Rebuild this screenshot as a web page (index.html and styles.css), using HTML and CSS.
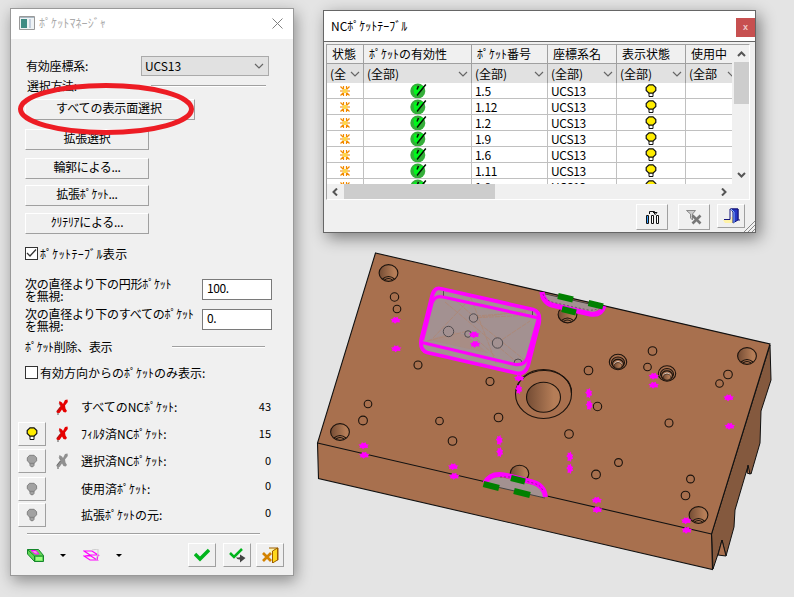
FILE: index.html
```html
<!DOCTYPE html>
<html lang="ja">
<head>
<meta charset="utf-8">
<title>ポケットマネージャ</title>
<link rel="stylesheet" href="styles.css">
</head>
<body>
<svg class="defs" width="0" height="0">
  <symbol id="bulb" viewBox="0 0 12 14"><path d="M4 8h4v4.500H4z" fill="#fff" stroke="#111"/><path d="M4 .8h4l2.800 2.700v3L8 9.200H4L1.200 6.500v-3z" fill="#ffed00" stroke="#111" stroke-width="1.200"/></symbol>
  <symbol id="bulb-off" viewBox="0 0 12 14"><path d="M3.500 1.300h4.600l2.500 2.500v3L8 9.400v2L7 12.700H5l-1-1.300v-2L1.300 6.800v-3z" fill="#a2a2a2" stroke="#808080"/><path d="M3.500 9.300h5" stroke="#808080"/></symbol>
  <symbol id="pin" viewBox="0 0 13 16"><path d="M2 13v3" stroke="#888" stroke-width="1.500"/><path d="M3.500 2 6 3.500 7 5 9 1l2.500-.5L11.800 3 9 6.500l.5 3L11 12l-1.500 1.500L7.500 13 6 10.500 3.500 14 .8 13.800.5 12 4.500 7 3 4z" fill="currentColor"/><path d="M3 4.500 4.500 7M.8 12.500 4.500 8" stroke="#444" stroke-opacity=".45" fill="none"/></symbol>
  <symbol id="star" viewBox="0 0 10 10"><path d="M.5.500 4 4M9.500.500 6 4M.5 9.500 4 6M9.500 9.500 6 6M0 5h3M7 5h3M3.500 0v3M6.500 0v3M3.500 7v3M6.500 7v3" stroke="#f28a00" stroke-width="1.200"/><path d="M3 3h4v4H3z" fill="#ffd64a"/></symbol>
  <symbol id="ok" viewBox="0 0 17 16"><circle cx="7.800" cy="8" r="7.500" fill="#35ae3a"/><path d="M3.500 4 6 2.500 7.500 6 11 3h3L8 12 6.500 13 4 10z" fill="#00f81c"/><path d="M7 12.500 15.800 1.500M7 6.500 8.500 3" fill="none" stroke="#021402" stroke-width="1.500"/></symbol>
  <symbol id="chev" viewBox="0 0 10 6"><path d="M1 1l4 4 4-4" fill="none" stroke="#666" stroke-width="1.200"/></symbol>
</svg>

<svg class="model" viewBox="0 0 794 597">
  <defs>
    <linearGradient id="bore"><stop offset="0" stop-color="#744c34"/><stop offset=".8" stop-color="#b57d57"/></linearGradient>
    <path id="spot" fill="#f0f" d="M-5-1 l2.500-.2 1-2 1.500 1 2.200-1 .5 2 2.800.2-1.500 1.500.5 2-3.200-.3-1.800 1.600-1.300-1.600-2.200.2.500-1.700z"/>
    <g id="corner-hole"><ellipse rx="9.400" ry="8.400" fill="url(#bore)"/><path d="M-6 6Q0 1 6 6M-4 7q4-3 8 0" fill="none"/></g>
    <g id="step-hole"><ellipse rx="8.700" ry="7.700"/><ellipse cy=".5" rx="6.500" ry="5.500" fill="#8f6043"/><ellipse cy="2" rx="5.500" ry="4.600"/><path d="M-3.800 2q3.800-5 7.600 0" fill="none" stroke="#dcd2cb"/><ellipse cy="3.500" rx="3.800" ry="3" fill="url(#bore)" stroke-width=".5"/></g>
  </defs>
  <path d="M770 345 771 380 761 411 760 443 751 474 747 472 748 466 735 510 734 527 726 556 722 540 718 554 713 569 711.500 534z" fill="#84593e" stroke="#111"/>
  <path d="M748 465l2 9-3-1zM722 540l4 16-8-1z" fill="#a9704e" stroke="#111"/>
  <path d="M375.500 253 770 344 711.500 534 712.500 569.500 318.500 478.500 317.500 443z" fill="#a8704e" stroke="#111" stroke-width="1.100"/>
  <path d="M317.500 443 711.500 534" stroke="#111" stroke-width="1.100"/>
  <g fill="#a8704e" stroke="#1c130d" stroke-width="1.100">
    <use href="#corner-hole" x="388.500" y="273"/><use href="#corner-hole" x="340" y="432"/><use href="#corner-hole" x="747" y="356"/><use href="#corner-hole" x="698.500" y="515"/><use href="#corner-hole" x="567.500" y="314.500"/>
    <ellipse cx="519.500" cy="473.500" rx="9.300" ry="8.300" fill="url(#bore)"/>
    <circle cx="394.500" cy="297" r="4.200"/><circle cx="397" cy="309" r="3.800"/><circle cx="418" cy="365" r="4"/><circle cx="490" cy="381.500" r="4"/><circle cx="368" cy="404" r="3.800"/><circle cx="363" cy="420.500" r="4.400"/><circle cx="439.500" cy="421" r="3.800"/><circle cx="498.500" cy="417.500" r="4.300"/><circle cx="452.500" cy="441" r="4.300"/><circle cx="588.500" cy="370.500" r="4.300"/><circle cx="652.500" cy="351" r="4.300"/><circle cx="647.500" cy="367" r="3.800"/><circle cx="728" cy="374.500" r="4.300"/><circle cx="719.500" cy="383.500" r="3.800"/><circle cx="597.500" cy="406.500" r="4.200"/><circle cx="669" cy="423" r="4"/><circle cx="569" cy="434" r="4.300"/><circle cx="618.500" cy="462.500" r="3.900"/><circle cx="596" cy="474.500" r="4.400"/><circle cx="690.500" cy="479" r="3.900"/><circle cx="685.500" cy="495.500" r="4.300"/>
    <use href="#step-hole" x="618" y="362"/><use href="#step-hole" x="667" y="373.500"/>
    <ellipse cx="543.500" cy="394" rx="28" ry="24.500"/><path d="M516.500 391a27.500 21.500 0 0 1 55 2" fill="none"/><ellipse cx="543.500" cy="397.300" rx="17" ry="15" fill="url(#bore)"/>
  </g>
  <path d="M440 288 531 309Q543 313 539 325L528 366Q525 374 516 372L428 352Q419 349 422 337L432 297Q434 288 440 288z" fill="#a39191"/>
  <g stroke="#ae8672" stroke-width=".8" fill="none" stroke-dasharray="5 1"><path d="M433 338l38-40 25 65M445 302l74 62M471 318l62-3M475 320l52 42M427 341l41-10 27 25M455 300l16 14M474 318l58-8M476 316l50-4M497 343l33-22"/></g>
  <path d="M428 340l26-8 12 3 22 18z" fill="#ae8672" fill-opacity=".4"/>
  <g fill="#a39191" stroke="#514b4e"><circle cx="473.500" cy="318" r="4.200"/><circle cx="448.500" cy="331.500" r="5.200"/><circle cx="468" cy="334" r="3.300"/><circle cx="497.500" cy="343" r="5.200"/><path d="M514 363q0-4 4-4t4 4M443.500 290v6M532.500 311v5" fill="none"/></g>
  <g fill="none" stroke="#f0f" stroke-width="3.800">
    <path d="M440 288.500 533 309.500Q541 312 539 323L528 366Q525 375 516 373L427 352.500Q419 350 421.500 338L431.500 298Q434 287 440 288.500z"/>
    <path d="M422 342.500 515 364.500Q525 366 527.500 357L538.500 318 443 297Q435 295 432 303L422.500 340" stroke-width="3.200"/>
  </g>
  <g fill="#a39191"><path d="M541 293l61 14-9 6-38-7q-12-2-14-13z"/><path d="M484 484q7-10 25-5l24 6q11 3 12 13z"/></g>
  <path d="M541 293l62 14M484 484l61 14" stroke="#444"/>
  <g fill="none" stroke="#f0f" stroke-width="5"><path d="M542 292q1 12 14 14l34 8q11 2 14-8"/><path d="M485 483q6-12 24-7l23 6q12 3 13.500 15"/></g>
  <path d="M543 294q2 7 13 9l32 7q9 1 12-4M500 477l10 0 23 6q8 2 10 8" fill="none" stroke="#6d286d" stroke-width=".7" stroke-dasharray="2 2"/>
  <g stroke="#008000" stroke-width="6"><path d="M558 296l15 3.500M588.500 303l14.500 3.500M562 309l14 3.500M483.500 484l15.500 4M514 491l16 4M511 478l14 3.500"/></g>
  <g>
    <use href="#spot" x="395.500" y="320"/><use href="#spot" x="396" y="348.500"/><use href="#spot" x="474" y="334.500"/><use href="#spot" x="475" y="344"/><use href="#spot" x="519" y="378"/><use href="#spot" x="653.500" y="376"/><use href="#spot" x="653.500" y="385"/><use href="#spot" x="728.500" y="397.500"/><use href="#spot" x="729.500" y="426"/><use href="#spot" x="363.500" y="445.500"/><use href="#spot" x="364" y="455"/><use href="#spot" x="453" y="466.500"/><use href="#spot" x="454" y="476"/><use href="#spot" x="596.500" y="500"/><use href="#spot" x="597" y="509.500"/><use href="#spot" x="686" y="520.500"/><use href="#spot" x="686.500" y="530"/>
    <use href="#spot" transform="translate(519 389) rotate(90)"/><use href="#spot" transform="translate(589 393) rotate(90)"/><use href="#spot" transform="translate(589.500 405) rotate(90)"/><use href="#spot" transform="translate(499.500 440) rotate(90)"/><use href="#spot" transform="translate(500 452) rotate(90)"/><use href="#spot" transform="translate(570 456.500) rotate(90)"/><use href="#spot" transform="translate(570 468.500) rotate(90)"/>
  </g>
</svg>

<section class="win manager">
  <header class="m-title">
    <svg width="16" height="14" viewBox="0 0 16 14"><path d="M.5.500h15v13H.5z" fill="#eef2f4" stroke="#999"/><path d="M2 3h6v9H2z" fill="#3f8b83"/><path d="M10 3h2v9h-2z" fill="#c3cedd"/><path d="M1 1.500h14" stroke="#a9b9c5"/></svg>
    <span>ﾎﾟｹｯﾄﾏﾈｰｼﾞｬ</span>
    <svg class="m-close" width="11" height="11" viewBox="0 0 11 11"><path d="M.5.500l10 10M10.500.500l-10 10" stroke="#808080"/></svg>
  </header>
  <div class="row cs"><span>有効座標系:</span><div class="select">UCS13<svg width="10" height="6"><use href="#chev"/></svg></div></div>
  <div class="row method"><span>選択方法:</span><hr></div>
  <div class="stack">
    <button class="wide">すべての表示面選択</button>
    <button>拡張選択</button>
    <button>輪郭による...</button>
    <button>拡張ﾎﾟｹｯﾄ...</button>
    <button>ｸﾘﾃﾘｱによる...</button>
  </div>
  <div class="row check c1"><i><svg width="11" height="11" viewBox="0 0 11 11"><path d="M1 5l3 3 6-6.500" fill="none" stroke="#333" stroke-width="1.300"/></svg></i><span class="loose">ﾎﾟｹｯﾄﾃｰﾌﾞﾙ表示</span></div>
  <div class="row field"><p>次の直径より下の円形ﾎﾟｹｯﾄ<br>を無視:</p><div class="input">100.</div></div>
  <div class="row field"><p>次の直径より下のすべてのﾎﾟｹｯﾄ<br>を無視:</p><div class="input">0.</div></div>
  <div class="row del"><span class="snug">ﾎﾟｹｯﾄ削除、表示</span><hr></div>
  <div class="row check c2"><i></i><span>有効方向からのﾎﾟｹｯﾄのみ表示:</span></div>
  <div class="counts">
    <b></b><svg class="red" width="13" height="16"><use href="#pin"/></svg><span>すべてのNCﾎﾟｹｯﾄ:</span><em>43</em>
    <b class="tool"><svg width="12" height="14"><use href="#bulb"/></svg></b><svg class="red" width="13" height="16"><use href="#pin"/></svg><span>ﾌｨﾙﾀ済NCﾎﾟｹｯﾄ:</span><em>15</em>
    <b class="tool"><svg width="12" height="14"><use href="#bulb-off"/></svg></b><svg class="gray" width="13" height="16"><use href="#pin"/></svg><span>選択済NCﾎﾟｹｯﾄ:</span><em>0</em>
    <b class="tool"><svg width="12" height="14"><use href="#bulb-off"/></svg></b><u></u><span>使用済ﾎﾟｹｯﾄ:</span><em class="up">0</em>
    <b class="tool"><svg width="12" height="14"><use href="#bulb-off"/></svg></b><u></u><span>拡張ﾎﾟｹｯﾄの元:</span><em class="up">0</em>
  </div>
  <hr class="sep">
  <footer class="m-foot">
    <svg width="17" height="15" viewBox="0 0 17 15"><path d="M.5 1.500h11l5 6v6H7.500L.5 6z" fill="#62d755" stroke="#15862c"/><path d="M.5 1.500l7 6.500h9M7.500 8v5.500" fill="none" stroke="#15862c"/><path d="M9 9h6v3.500H9z" fill="#9cff80"/><path d="M4 2.500h5l3 3.500H8z" fill="#e9d" stroke="#f0f"/></svg>
    <svg class="dd" width="6" height="3"><path d="M0 0h6L3 3z"/></svg>
    <svg class="wire" width="17" height="13" viewBox="0 0 17 13"><path d="M1 2h8l6 4H7zM1 7h7l6 4H7zM1 2l6 4M15 6l-1 5M2 7l5-1" fill="none" stroke="#f0f" stroke-width="1.200"/><path d="M9 1l6-1v4l-2 7" fill="none" stroke="#ccc"/></svg>
    <svg class="dd" width="6" height="3"><path d="M0 0h6L3 3z"/></svg>
    <b class="tool ok"><svg width="16" height="14" viewBox="0 0 16 14"><path d="M1 6l5 5 9-9" fill="none" stroke="#00b41c" stroke-width="3.500"/></svg></b>
    <b class="tool ap"><svg width="17" height="15" viewBox="0 0 17 15"><path d="M1 5l4 4 8-8" fill="none" stroke="#00b41c" stroke-width="2.500"/><path d="M7 9q1 3 4 2.500V14.500l5.500-4.500-5.500-3.500v2.500q-2 1-4 0z" fill="#444"/></svg></b>
    <b class="tool"><svg width="17" height="16" viewBox="0 0 17 16"><path d="M7 1h9v12h-3" fill="#fff5b0" stroke="#9b5c00"/><path d="M10.500 4l5-3v12l-5 3z" fill="#ffd91c" stroke="#9b5c00"/><path d="M1 6l8 8M9 6l-8 8" stroke="#d38200" stroke-width="2.700"/></svg></b>
  </footer>
</section>

<svg class="ring" width="180" height="54" viewBox="0 0 180 54"><ellipse cx="89" cy="26" rx="85.500" ry="23.500" fill="none" stroke="#ed1c24" stroke-width="5"/></svg>

<section class="win table">
  <header class="t-title"><span>NCﾎﾟｹｯﾄﾃｰﾌﾞﾙ</span><b>x</b></header>
  <div class="frame">
    <div class="grid">
      <div class="r head"><span>状態</span><span>ﾎﾟｹｯﾄの有効性</span><span>ﾎﾟｹｯﾄ番号</span><span>座標系名</span><span>表示状態</span><span>使用中</span></div>
      <div class="r filter"><span><q>(全</q><svg width="10" height="6"><use href="#chev"/></svg></span><span><q>(全部)</q><svg width="10" height="6"><use href="#chev"/></svg></span><span><q>(全部)</q><svg width="10" height="6"><use href="#chev"/></svg></span><span><q>(全部)</q><svg width="10" height="6"><use href="#chev"/></svg></span><span><q>(全部)</q><svg width="10" height="6"><use href="#chev"/></svg></span><span><q>(全部</q><svg class="half" width="10" height="6"><use href="#chev"/></svg></span></div>
      <div class="r"><span><svg width="10" height="10"><use href="#star"/></svg></span><span><svg width="17" height="16"><use href="#ok"/></svg></span><span>1.5</span><span>UCS13</span><span><svg width="12" height="14"><use href="#bulb"/></svg></span><span></span></div>
      <div class="r"><span><svg width="10" height="10"><use href="#star"/></svg></span><span><svg width="17" height="16"><use href="#ok"/></svg></span><span>1.12</span><span>UCS13</span><span><svg width="12" height="14"><use href="#bulb"/></svg></span><span></span></div>
      <div class="r"><span><svg width="10" height="10"><use href="#star"/></svg></span><span><svg width="17" height="16"><use href="#ok"/></svg></span><span>1.2</span><span>UCS13</span><span><svg width="12" height="14"><use href="#bulb"/></svg></span><span></span></div>
      <div class="r"><span><svg width="10" height="10"><use href="#star"/></svg></span><span><svg width="17" height="16"><use href="#ok"/></svg></span><span>1.9</span><span>UCS13</span><span><svg width="12" height="14"><use href="#bulb"/></svg></span><span></span></div>
      <div class="r"><span><svg width="10" height="10"><use href="#star"/></svg></span><span><svg width="17" height="16"><use href="#ok"/></svg></span><span>1.6</span><span>UCS13</span><span><svg width="12" height="14"><use href="#bulb"/></svg></span><span></span></div>
      <div class="r"><span><svg width="10" height="10"><use href="#star"/></svg></span><span><svg width="17" height="16"><use href="#ok"/></svg></span><span>1.11</span><span>UCS13</span><span><svg width="12" height="14"><use href="#bulb"/></svg></span><span></span></div>
      <div class="r"><span><svg width="10" height="10"><use href="#star"/></svg></span><span><svg width="17" height="16"><use href="#ok"/></svg></span><span>1.8</span><span>UCS13</span><span><svg width="12" height="14"><use href="#bulb"/></svg></span><span></span></div>
    </div>
    <div class="vbar"><svg width="9" height="6" viewBox="0 0 9 6"><path d="M1 5l3.500-3.500L8 5" fill="none" stroke="#555" stroke-width="2"/></svg><i></i><svg width="9" height="6" viewBox="0 0 9 6"><path d="M1 1l3.500 3.500L8 1" fill="none" stroke="#555" stroke-width="2"/></svg></div>
    <div class="hbar"><svg width="6" height="8" viewBox="0 0 6 8"><path d="M5 .5 1.500 4 5 7.500" fill="none" stroke="#555" stroke-width="2"/></svg><i></i><svg width="6" height="8" viewBox="0 0 6 8"><path d="M1 .5 4.500 4 1 7.500" fill="none" stroke="#555" stroke-width="2"/></svg></div>
  </div>
  <footer class="t-foot">
    <b class="tool big"><svg width="15" height="14" viewBox="0 0 15 14"><path d="M1.500 5.500h2v8h-2zM6.500 5.500h2v8h-2zM11.500 5.500h2v8h-2z" fill="#fff" stroke="#111"/><path d="M2.500 6v7" stroke="#3aa0ff"/><path d="M4.500 4V1.500H9.500V4M8 2.500h4L9.700 5" fill="none" stroke="#111"/></svg></b>
    <b class="tool big"><svg width="16" height="16" viewBox="0 0 16 16"><path d="M.5 1.500h9L6.500 5v6l-2-2V5z" fill="#ccc" stroke="#888"/><path d="M6.500 6.500l8 8M14.500 6.500l-8 8" stroke="#777" stroke-width="2.600"/></svg></b>
    <b class="tool"><svg width="17" height="16" viewBox="0 0 17 16"><path d="M0 12h8v-3h2v6H2z" fill="#fff3a8"/><path d="M1 11.500h6V1h8v11h2" fill="none" stroke="#15157a"/><path d="M8 1h7v11l-5 3V4z" fill="#2536c5" stroke="#101077"/><path d="M8 1l3 3v11" fill="none" stroke="#82b6ff"/></svg></b>
  </footer>
  <svg class="grip" width="12" height="12" viewBox="0 0 12 12"><path d="M1 12 12 1M5 12l7-7M9 12l3-3" stroke="#888"/></svg>
</section>
</body>
</html>
```
FILE: styles.css
```css
* { box-sizing: border-box; }
body {
  margin: 0; width: 794px; height: 597px; position: relative; overflow: hidden;
  background: #e4e4e4; color: #000;
  font: 12px/12px "Noto Sans CJK JP", "Liberation Sans", sans-serif;
}
svg { display: block; flex: none; }
.defs, .model { position: absolute; left: 0; top: 0; }
.model { width: 794px; height: 597px; }
.win { position: absolute; background: #f0f0f0; white-space: nowrap; display: flex; flex-direction: column; }
hr { margin: 0; border: 0; height: 2px; background: #a0a0a0; border-bottom: 1px solid #fff; }

.manager { left: 10px; top: 8px; width: 284px; height: 568px; border: 1px solid #999; box-shadow: 2px 5px 14px rgba(0,0,0,.38); }
.m-title { height: 30px; background: #fff; display: flex; align-items: center; padding: 0 10px 2px 8px; color: #aaa; }
.m-title span { margin-left: 4px; letter-spacing: .1px; }
.m-close { margin-left: auto; }
.row { display: flex; align-items: center; flex: none; }
.cs { margin-top: 17px; height: 20px; padding: 0 24px 0 15px; justify-content: space-between; }
.cs span { letter-spacing: -.2px; margin-top: -1px; }
.select { width: 128px; height: 20px; border: 1px solid #aaa; background: #e1e1e1; padding: 0 4px 0 3px; display: flex; align-items: center; justify-content: space-between; letter-spacing: -.1px; }
.method { margin-top: 4px; height: 12px; padding-left: 16px; }
.method span { width: 52px; letter-spacing: -.3px; }
.method hr { width: 115px; margin-left: 72px; }
.stack { display: flex; flex-direction: column; align-items: flex-start; padding-left: 14px; margin-top: 7px; }
button { font: inherit; color: inherit; width: 124px; height: 21px; padding: 0 0 3px; background: #f0f0f0; border: 1px solid; border-color: #fff #a0a0a0 #a0a0a0 #fff; margin-bottom: 7px; letter-spacing: -.3px; }
button.wide { width: 170px; margin-bottom: 9px; padding-right: 2px; letter-spacing: -.1px; }
button:nth-child(3) { margin: 1px 0 6px; }
.check { height: 13px; padding-left: 14px; }
.check i { width: 13px; height: 13px; margin-right: 2px; border: 1px solid #333; background: #fff; }
.c1 { margin-top: 6px; margin-bottom: 19px; }
.loose { letter-spacing: .35px; }
.field { padding: 0 21px 0 14px; height: 21px; margin-bottom: 9px; justify-content: space-between; }
.field p { margin: 1px 0 0; letter-spacing: -.25px; }
.input { width: 70px; height: 21px; border: 1px solid #7a7a7a; background: #fff; padding: 2px 4px; letter-spacing: -.4px; }
.del { height: 12px; margin-top: 2px; padding: 0 28px 0 14px; justify-content: space-between; }
.del hr { width: 93px; }
.c2 { margin-top: 13px; }
.snug { letter-spacing: -.3px; }
.counts { display: grid; grid-template-columns: 38px 25px 160px 30px; grid-template-rows: 27px 27px 28px 27px 26px; align-items: center; padding-left: 7px; margin-top: 14px; }
.counts em { font-style: normal; text-align: right; font-size: 11px; padding-bottom: 2px; }
.counts em.up { padding-bottom: 7px; }
.red { color: #e60000; }
.gray { color: #909090; }
.tool { width: 28px; height: 24px; flex: none; border: 1px solid; border-color: #fff #a0a0a0 #a0a0a0 #fff; display: flex; align-items: center; justify-content: center; font-weight: 400; }
.big { width: 32px; height: 26px; }
.sep { width: 233px; margin: 5px 0 8px 16px; flex: none; }
.m-foot { display: flex; align-items: center; padding-left: 16px; height: 24px; }
.dd { margin-left: 16px; }
.wire { margin-left: 17px; }
.ok { margin-left: 66px; }
.ap { margin: 0 5px 0 7px; }
.ring { position: absolute; left: 17px; top: 83px; }

.table { left: 323px; top: 10px; width: 433px; height: 223px; border: 1px solid #666; box-shadow: 4px 5px 15px rgba(0,0,0,.45); }
.t-title { height: 31px; flex: none; background: #fff; border-bottom: 1px solid #666; display: flex; align-items: center; justify-content: space-between; padding-left: 7px; }
.t-title b { width: 19px; height: 19px; margin-top: 3px; background: #c75050; color: #eecaca; font: bold 9px/18px "Liberation Sans", sans-serif; text-align: center; }
.frame { margin: 2px 5px 0 2px; height: 156px; flex: none; border-top: 1px solid #a0a0a0; border-left: 1px solid #a0a0a0; border-bottom: 1px solid #fff; border-right: 1px solid #fff; display: grid; grid-template: 139px 15px / 405px 17px; }
.grid { overflow: hidden; background: #fff; }
.r { display: grid; grid-template-columns: 37px 108px 76px 69px 69px 46px; height: 16px; }
.r > span { display: flex; align-items: center; border-right: 1px solid #c0c0c0; border-bottom: 1px solid #c0c0c0; padding-left: 3px; overflow: hidden; letter-spacing: -.3px; }
.r > span:nth-child(1), .r > span:nth-child(2), .r > span:nth-child(5) { justify-content: center; padding: 0; }
.r > span:nth-child(2) { padding-left: 1px; }
.r > span:last-child { border-right: 0; }
.head { height: 19px; background: #f0f0f0; }
.r.head > span { padding-left: 5px; justify-content: flex-start; border-color: #a0a0a0; letter-spacing: 0; }
.filter { height: 19px; background: #e1e1e1; }
.r.filter > span { padding: 0 3px; justify-content: space-between; border-bottom: 0; border-right: 1px solid #a0a0a0; letter-spacing: 0; }
.r.filter > span:last-child { padding-right: 0; border-right: 0; }
.half { margin-right: -5px; }
q { quotes: none; }
.vbar { display: flex; flex-direction: column; align-items: center; padding: 6px 0 6px 1px; }
.vbar i { width: 15px; height: 42px; background: #cdcdcd; margin: 5px 0 auto; }
.hbar { display: flex; align-items: center; padding: 0 5px; }
.hbar i { width: 151px; height: 15px; background: #cdcdcd; margin: 0 auto 0 6px; }
.t-foot { display: flex; justify-content: flex-end; align-items: flex-start; padding: 4px 10px 0 0; }
.t-foot .big { margin-right: 10px; }
.t-foot .big + .big { margin-right: 7px; }
.grip { position: absolute; right: 0; bottom: 0; }
```
